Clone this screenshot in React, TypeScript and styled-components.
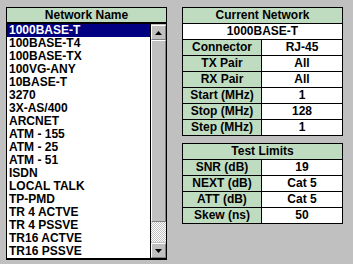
import React from "react";
import styled, { createGlobalStyle } from "styled-components";

const Global = createGlobalStyle`
  html, body { margin: 0; padding: 0; background: #c0c0c0; }
  body { font-family: "Liberation Sans", Arial, sans-serif; font-weight: bold; font-size: 12px; }
`;

const Page = styled.div`
  display: flex;
  align-items: flex-start;
  gap: 15px;
  padding: 7px 0 0 6px;
  width: 353px;
  height: 264px;
  box-sizing: border-box;
  background: #c0c0c0;
`;

const ListBox = styled.div`
  width: 161px;
  box-sizing: border-box;
  border: 1px solid #000;
  border-bottom-width: 2px;
  display: flex;
  flex-direction: column;
`;

const ListHeader = styled.div`
  height: 14px;
  line-height: 14px;
  background: #c0dcc0;
  text-align: center;
  border-bottom: 2px solid #000;
`;

const ListBody = styled.div`
  display: flex;
  background: #fff;
  height: 234px;
`;

const Items = styled.div`
  flex: 1;
  display: flex;
  flex-direction: column;
`;

const Item = styled.div<{ $selected?: boolean }>`
  height: 13px;
  line-height: 13px;
  padding-left: 2px;
  white-space: nowrap;
  color: ${(p) => (p.$selected ? "#fff" : "#000")};
  background: ${(p) => (p.$selected ? "#000080" : "transparent")};
`;

const ScrollBar = styled.div`
  width: 15px;
  display: flex;
  flex-direction: column;
  border-left: 1px solid #000;
  background: #c0c0c0;
`;

const ScrollButton = styled.div`
  height: 15px;
  box-sizing: border-box;
  background: #c0c0c0;
  border-top: 1px solid #fff;
  border-left: 1px solid #fff;
  border-right: 1px solid #808080;
  border-bottom: 1px solid #808080;
  display: flex;
  align-items: center;
  justify-content: center;
  margin-top: 1px;
`;

const Thumb = styled.div`
  height: 182px;
  box-sizing: border-box;
  background: #c0c0c0;
  border-top: 1px solid #fff;
  border-left: 1px solid #fff;
  border-right: 1px solid #808080;
  border-bottom: 1px solid #808080;
`;

const Track = styled.div`
  flex: 1;
  background-image: repeating-conic-gradient(#c0c0c0 0 25%, #ffffff 0 50%);
  background-size: 2px 2px;
`;

const RightCol = styled.div`
  display: flex;
  flex-direction: column;
  gap: 7px;
`;

const Table = styled.div`
  display: grid;
  grid-template-columns: 78px 80px;
  grid-auto-rows: 15px;
  gap: 1px;
  background: #000;
  border: 1px solid #000;
`;

const Cell = styled.div<{ $kind: "head" | "label" | "value" }>`
  grid-column: ${(p) => (p.$kind === "head" ? "1 / span 2" : "auto")};
  background: ${(p) => (p.$kind === "value" ? "#fff" : "#c0dcc0")};
  text-align: center;
  line-height: 15px;
  white-space: nowrap;
`;

const WideValue = styled(Cell)`
  grid-column: 1 / span 2;
`;

const Arrow = ({ down }: { down?: boolean }) => (
  <svg width="7" height="4" viewBox="0 0 7 4">
    <polygon points={down ? "0,0 7,0 3.5,4" : "0,4 7,4 3.5,0"} fill="#000" />
  </svg>
);

const networks = [
  "1000BASE-T",
  "100BASE-T4",
  "100BASE-TX",
  "100VG-ANY",
  "10BASE-T",
  "3270",
  "3X-AS/400",
  "ARCNET",
  "ATM - 155",
  "ATM - 25",
  "ATM - 51",
  "ISDN",
  "LOCAL TALK",
  "TP-PMD",
  "TR 4 ACTVE",
  "TR 4 PSSVE",
  "TR16 ACTVE",
  "TR16 PSSVE",
];

const current: [string, string][] = [
  ["Connector", "RJ-45"],
  ["TX Pair", "All"],
  ["RX Pair", "All"],
  ["Start (MHz)", "1"],
  ["Stop (MHz)", "128"],
  ["Step (MHz)", "1"],
];

const limits: [string, string][] = [
  ["SNR (dB)", "19"],
  ["NEXT (dB)", "Cat 5"],
  ["ATT (dB)", "Cat 5"],
  ["Skew (ns)", "50"],
];

export default function App() {
  return (
    <>
      <Global />
      <Page>
        <ListBox>
          <ListHeader>Network Name</ListHeader>
          <ListBody>
            <Items>
              {networks.map((n, i) => (
                <Item key={n} $selected={i === 0}>
                  {n}
                </Item>
              ))}
            </Items>
            <ScrollBar>
              <ScrollButton>
                <Arrow />
              </ScrollButton>
              <Thumb />
              <Track />
              <ScrollButton>
                <Arrow down />
              </ScrollButton>
            </ScrollBar>
          </ListBody>
        </ListBox>
        <RightCol>
          <Table>
            <Cell $kind="head">Current Network</Cell>
            <WideValue $kind="value">1000BASE-T</WideValue>
            {current.map(([l, v]) => (
              <React.Fragment key={l}>
                <Cell $kind="label">{l}</Cell>
                <Cell $kind="value">{v}</Cell>
              </React.Fragment>
            ))}
          </Table>
          <Table>
            <Cell $kind="head">Test Limits</Cell>
            {limits.map(([l, v]) => (
              <React.Fragment key={l}>
                <Cell $kind="label">{l}</Cell>
                <Cell $kind="value">{v}</Cell>
              </React.Fragment>
            ))}
          </Table>
        </RightCol>
      </Page>
    </>
  );
}
